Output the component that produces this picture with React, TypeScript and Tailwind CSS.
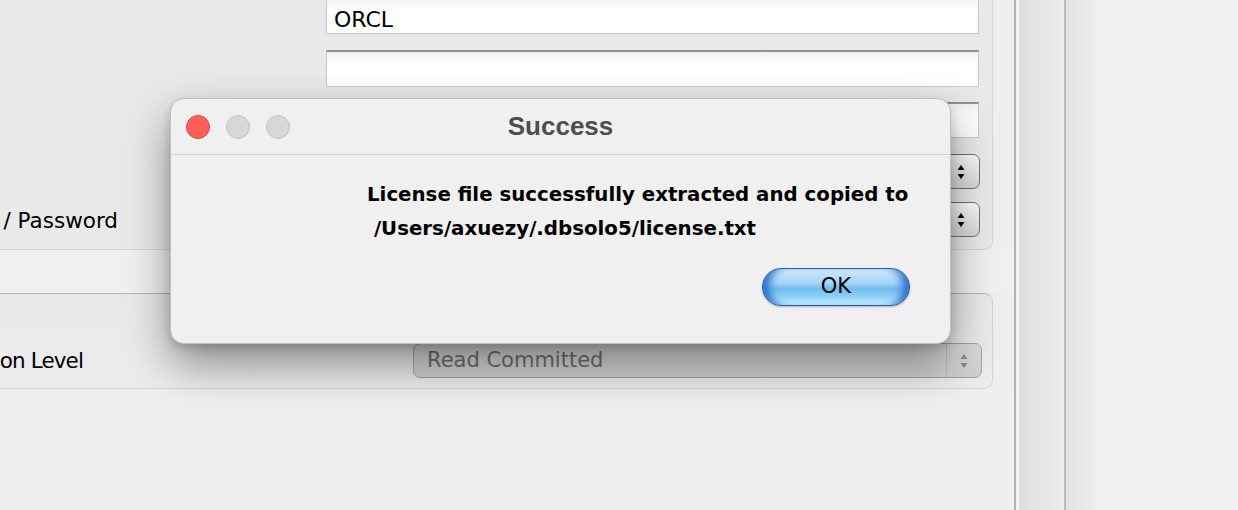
function Arrows({ color = "#000" }: { color?: string }) {
  return (
    <svg width="8" height="20" viewBox="0 0 8 20" className="shrink-0">
      <path d="M4 3 L7.5 8 L0.5 8 Z" fill={color} />
      <path d="M0.5 12 L7.5 12 L4 17 Z" fill={color} />
    </svg>
  );
}

function TextField({ className, children }: { className: string; children?: React.ReactNode }) {
  return (
    <div
      className={`ml-[336px] w-[653px] shrink-0 border border-[#c9c9c9] border-t-2 border-t-[#8f8f8f] bg-gradient-to-b from-[#f2f2f2] to-white to-[35%] flex items-center pl-[7px] text-[22px] text-black ${className}`}
    >
      {children}
    </div>
  );
}

function Combo({ className }: { className: string }) {
  return (
    <div
      className={`w-[654px] h-[35px] shrink-0 rounded-[7px] border border-[#727272] bg-gradient-to-b from-[#fcfcfc] to-[#d8d8d8] flex items-center justify-end pr-[14px] ${className}`}
    >
      <Arrows />
    </div>
  );
}

export default function App() {
  return (
    <div className="relative w-[1238px] h-[510px] overflow-hidden bg-[#efefef] flex font-['DejaVu_Sans',sans-serif]">
      {/* Left form panel */}
      <div className="w-[1014px] shrink-0 flex flex-col bg-[#eeeeee]">
        {/* Group 1 */}
        <div className="-ml-[10px] -mt-[10px] w-[1003px] h-[260px] shrink-0 rounded-br-[9px] border-r border-b border-[#d6d6d6] bg-[#e9e9e9] flex flex-col pt-[6px]">
          <TextField className="h-[38px] pt-[7px]">ORCL</TextField>
          <TextField className="mt-[16px] h-[37px]" />
          <TextField className="mt-[15px] h-[36px]" />
          <Combo className="mt-[16px] ml-[336px]" />
          <div className="mt-[13px] h-[35px] flex items-center shrink-0">
            <div className="w-[128px] pl-[10px] pt-[4px] flex justify-end whitespace-nowrap text-[21.5px] text-black">
              <span>/ Password</span>
            </div>
            <Combo className="ml-[208px]" />
          </div>
        </div>
        <div className="h-[43px] shrink-0 bg-[#f0f0f0]" />
        {/* Group 2 */}
        <div className="-ml-[10px] w-[1003px] h-[96px] shrink-0 rounded-r-[9px] border border-l-0 border-[#d4d4d4] border-t-[#b3b3b3] bg-gradient-to-b from-[#e9e9e9] to-[#ececec] flex flex-col pt-[49px]">
          <div className="h-[35px] flex items-center shrink-0">
            <div className="w-[93px] pl-[10px] pt-[2px] flex justify-end whitespace-nowrap text-[21.5px] tracking-[-0.9px] text-black">
              <span>on Level</span>
            </div>
            <div className="ml-[330px] w-[569px] h-[35px] rounded-[7px] border border-[#a4a4a4] bg-gradient-to-b from-[#dcdcdc] to-[#cfcfcf] flex items-center">
              <div className="flex-1 pl-[13px] text-[21px] text-[#6f6f6f] whitespace-nowrap">Read Committed</div>
              <div className="w-[35px] h-full border-l border-[#bdbdbd] flex items-center justify-center">
                <Arrows color="#8a8a8a" />
              </div>
            </div>
          </div>
        </div>
        <div className="flex-1 bg-[#efefef]" />
      </div>
      {/* Divider */}
      <div className="w-[2px] shrink-0 bg-[#b3b3b3]" />
      <div className="w-[3px] shrink-0 bg-[#f5f5f5]" />
      <div className="w-[45px] shrink-0 bg-gradient-to-r from-[#dedede] to-[#ececec]" />
      <div className="w-[2px] shrink-0 bg-[#bdbdbd]" />
      <div className="flex-1 bg-gradient-to-r from-[#e3e3e3] to-[#f0f0f0] to-[20%]" />

      {/* Dialog */}
      <div className="absolute left-[170px] top-[98px] w-[781px] h-[246px] rounded-[14px] bg-[#f0f0f0] border border-[#c0c0c0] shadow-[0_20px_45px_rgba(0,0,0,0.42),0_4px_10px_rgba(0,0,0,0.15)] flex flex-col">
        <div className="relative h-[55px] shrink-0 flex items-center pl-[15px] gap-[16px]">
          <div className="w-[24px] h-[24px] rounded-full bg-[#fe5f57] border border-[#e2463f]" />
          <div className="w-[24px] h-[24px] rounded-full bg-[#d7d7d7] border border-[#c3c3c3]" />
          <div className="w-[24px] h-[24px] rounded-full bg-[#d7d7d7] border border-[#c3c3c3]" />
          <div className="absolute inset-0 flex items-center justify-center font-['Liberation_Sans',sans-serif] font-bold text-[26px] text-[#4d4d4d] pointer-events-none">
            Success
          </div>
        </div>
        <div className="h-px shrink-0 bg-[#d3d3d3]" />
        <div className="pl-[196px] pt-[23px] font-bold text-[19.8px] leading-[34px] text-black whitespace-pre">
          <div>License file successfully extracted and copied to</div>
          <div> /Users/axuezy/.dbsolo5/license.txt</div>
        </div>
        <div className="flex justify-end pr-[40px] mt-[22px]">
          <button className="w-[148px] h-[38px] rounded-full border border-[#2a5ea8] bg-[linear-gradient(to_bottom,#d2eafc_0%,#a3d3f7_40%,#72bcf0_55%,#94d3f8_80%,#c6efff_100%)] shadow-[inset_12px_0_8px_-6px_#2a6fcc,inset_-12px_0_8px_-6px_#2a6fcc,0_1px_2px_rgba(0,0,0,0.25)] text-[21px] text-black flex items-center justify-center">
            OK
          </button>
        </div>
      </div>
    </div>
  );
}
